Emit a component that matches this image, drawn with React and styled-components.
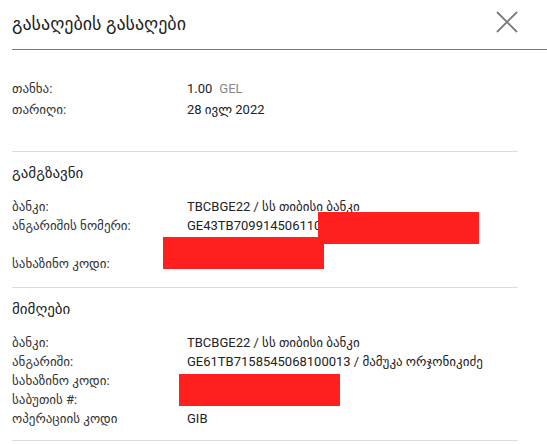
import styled, { createGlobalStyle } from 'styled-components'

const GlobalStyle = createGlobalStyle`
    body {
        margin: 0;
        background: #ffffff;
        font-family: Roboto, "DejaVu Sans", sans-serif;
        color: #222;
    }
`
const Modal = styled.div`
    width: 547px;
    height: 444px;
    overflow: hidden;
    position: relative;
    background: #fff;
`
const Header = styled.div`
    height: 49px;
    margin-left: 12px;
    padding-right: 29px;
    display: flex;
    align-items: center;
    justify-content: space-between;
    border-bottom: 1px solid #2393c6;
`
const Title = styled.div`
    font-size: 18px;
    color: #222;
    padding-bottom: 3px;
`
const CloseButton = styled.button`
    border: none;
    background: none;
    padding: 0;
    width: 22px;
    height: 22px;
    margin-bottom: 6px;
    cursor: pointer;
    display: flex;
`
const Body = styled.div`
    padding: 0 29px 0 12px;
`
const Section = styled.div`
    position: relative;
    border-bottom: 1px solid #dcdcdc;
    padding: ${({pad}) => pad};
`
const SectionTitle = styled.div`
    font-size: 15px;
    line-height: 20px;
    color: #222;
    margin-bottom: 14px;
`
const Row = styled.div`
    display: grid;
    grid-template-columns: 175px 1fr;
    line-height: ${({big}) => big ? '21px' : '19px'};
    min-height: ${({tall}) => tall ? '38px' : 'auto'};
    color: #222;
    white-space: nowrap;
`
const Label = styled.div`
    color: #333;
    font-size: 13px;
`
const Value = styled.div`
    font-size: 13px;
`
const Currency = styled.span`
    color: #888;
    margin-left: 7px;
`
const Redacted = styled.div`
    position: absolute;
    background: #ff1f1f;
    left: ${({x}) => x}px;
    top: ${({y}) => y}px;
    width: ${({w}) => w}px;
    height: ${({h}) => h}px;
`

const CloseIcon = () => (
    <svg width="22" height="22" viewBox="0 0 22 22">
        <path d="M1 1 L21 21 M21 1 L1 21" stroke="#7a7a7a" strokeWidth="1.8" fill="none" />
    </svg>
)

const App = () => {
    return (
        <Modal>
            <GlobalStyle />
            <Header>
                <Title>გასაღების გასაღები</Title>
                <CloseButton aria-label="close">
                    <CloseIcon />
                </CloseButton>
            </Header>
            <Body>
                <Section pad="28px 0 31px">
                    <Row big>
                        <Label>თანხა:</Label>
                        <Value>1.00<Currency>GEL</Currency></Value>
                    </Row>
                    <Row big>
                        <Label>თარიღი:</Label>
                        <Value>28 ივლ 2022</Value>
                    </Row>
                </Section>
                <Section pad="11px 0 14px">
                    <SectionTitle>გამგზავნი</SectionTitle>
                    <Row>
                        <Label>ბანკი:</Label>
                        <Value>TBCBGE22 / სს თიბისი ბანკი</Value>
                    </Row>
                    <Row tall>
                        <Label>ანგარიშის ნომერი:</Label>
                        <Value>GE43TB7099145061100</Value>
                    </Row>
                    <Row>
                        <Label>სახაზინო კოდი:</Label>
                        <Value></Value>
                    </Row>
                    <Redacted x={306} y={60} w={161} h={32} />
                    <Redacted x={151} y={85} w={161} h={32} />
                </Section>
                <Section pad="11px 0 12px">
                    <SectionTitle>მიმღები</SectionTitle>
                    <Row>
                        <Label>ბანკი:</Label>
                        <Value>TBCBGE22 / სს თიბისი ბანკი</Value>
                    </Row>
                    <Row>
                        <Label>ანგარიში:</Label>
                        <Value>GE61TB7158545068100013 / მამუკა ორჯონიკიძე</Value>
                    </Row>
                    <Row>
                        <Label>სახაზინო კოდი:</Label>
                        <Value></Value>
                    </Row>
                    <Row>
                        <Label>საბუთის #:</Label>
                        <Value></Value>
                    </Row>
                    <Row>
                        <Label>ოპერაციის კოდი</Label>
                        <Value>GIB</Value>
                    </Row>
                    <Redacted x={167} y={86} w={161} h={32} />
                </Section>
            </Body>
        </Modal>
    )
}

export default App
